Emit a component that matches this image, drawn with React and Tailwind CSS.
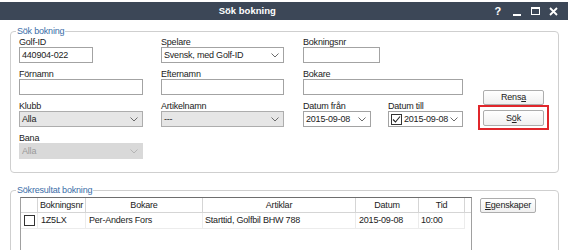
import React from 'react';

const Chevron = ({ color = '#6b6b6b' }) => (
    <svg width="8" height="5" viewBox="0 0 8 5" className="shrink-0">
        <polyline points="0.5,0.5 4,4 7.5,0.5" fill="none" stroke={color} strokeWidth="1" />
    </svg>
);

const CheckBox = ({ checked }) => (
    <div className="w-[11px] h-[11px] border border-[#333] bg-white flex items-center justify-center shrink-0">
        {checked && (
            <svg width="9" height="9" viewBox="0 0 9 9">
                <polyline points="1,4.5 3.5,7 8,1.5" fill="none" stroke="#222" strokeWidth="1.1" />
            </svg>
        )}
    </div>
);

const Field = ({ label, children }) => (
    <div className="flex flex-col">
        <div className="h-[10px] leading-[10px] text-[#222]">{label}</div>
        {children}
    </div>
);

const TextBox = ({ w, value }) => (
    <div className={`${w} h-[16px] border border-[#a3a3a3] bg-white px-[2px] leading-[14px] text-[#222]`}>
        {value}
    </div>
);

const Select = ({ w, value, kind = 'gray', checkbox }) => {
    const styles = {
        gray: 'bg-[#e6e6e6] border-[#adadad] text-[#222]',
        white: 'bg-white border-[#a3a3a3] text-[#222]',
        disabled: 'bg-[#d9d9d9] border-[#d9d9d9] text-[#9a9a9a]',
    };
    return (
        <div className={`${w} h-[16px] border ${styles[kind]} flex items-center justify-between pl-[2px] pr-[4px]`}>
            <div className="flex items-center gap-[2px]">
                {checkbox && <CheckBox checked />}
                <span className="leading-[14px]">{value}</span>
            </div>
            <Chevron color={kind === 'disabled' ? '#b5b5b5' : '#6b6b6b'} />
        </div>
    );
};

const Button = ({ children, w }) => (
    <div className={`${w} h-[15px] border border-[#adadad] rounded-[2px] bg-gradient-to-b from-white to-[#f0f0f0] flex items-center justify-center leading-[13px] text-[#222]`}>
        {children}
    </div>
);

const GroupBox = ({ title, className, children }) => (
    <div className={`relative border border-[#cfcfcf] rounded-[4px] ${className}`}>
        <span className="absolute -top-[7px] left-[5px] bg-white px-[1px] leading-[12px] text-[#3a6ea8]">
            {title}
        </span>
        {children}
    </div>
);

const headers = [
    { label: '', w: 'w-[17px]' },
    { label: 'Bokningsnr', w: 'w-[48px]' },
    { label: 'Bokare', w: 'w-[117px]' },
    { label: 'Artiklar', w: 'w-[153px]' },
    { label: 'Datum', w: 'w-[63px]' },
    { label: 'Tid', w: 'w-[46px]' },
];

const rows = [
    { nr: '1Z5LX', bokare: 'Per-Anders Fors', artiklar: 'Starttid, Golfbil BHW 788', datum: '2015-09-08', tid: '10:00' },
];

export default function App() {
    return (
        <div className="w-[570px] h-[250px] overflow-hidden bg-white font-['Liberation_Sans',Arial,sans-serif] text-[9px] tracking-[-0.2px]">
            {/* titelrad */}
            <div className="mt-[2px] mr-[2px] h-[18px] bg-[#3c4757] flex items-center text-white">
                <div className="flex-1 text-center font-bold text-[9.5px] tracking-normal">Sök bokning</div>
                <div className="flex items-center pr-[10px] font-bold text-[11px]">
                    <span className="leading-none">?</span>
                    <span className="ml-[12px] w-[8px] h-[2px] bg-white mt-[7px]" />
                    <span className="ml-[10px] w-[9px] h-[8px] border border-white border-t-2" />
                    <svg width="9" height="9" viewBox="0 0 9 9" className="ml-[9px]">
                        <path d="M1 1 L8 8 M8 1 L1 8" stroke="white" strokeWidth="1.8" />
                    </svg>
                </div>
            </div>

            {/* Sök bokning */}
            <GroupBox title="Sök bokning" className="ml-[10px] mt-[11px] w-[549px] h-[142px]">
                <div className="flex pl-[8px] pt-[5px]">
                    <div className="grid grid-cols-[142px_142px_159px] auto-rows-[26px] gap-y-[6px]">
                        <Field label="Golf-ID"><TextBox w="w-[74px]" value="440904-022" /></Field>
                        <Field label="Spelare"><Select w="w-[123px]" value="Svensk, med Golf-ID" kind="white" /></Field>
                        <Field label="Bokningsnr"><TextBox w="w-[77px]" value="" /></Field>

                        <Field label="Förnamn"><TextBox w="w-[124px]" value="" /></Field>
                        <Field label="Efternamn"><TextBox w="w-[123px]" value="" /></Field>
                        <Field label="Bokare"><TextBox w="w-[160px]" value="" /></Field>

                        <Field label="Klubb"><Select w="w-[124px]" value="Alla" /></Field>
                        <Field label="Artikelnamn"><Select w="w-[123px]" value="---" /></Field>
                        <div className="flex gap-[17px]">
                            <Field label="Datum från"><Select w="w-[68px]" value="2015-09-08" kind="white" /></Field>
                            <Field label="Datum till"><Select w="w-[75px]" value="2015-09-08" kind="white" checkbox /></Field>
                        </div>

                        <Field label="Bana"><Select w="w-[124px]" value="Alla" kind="disabled" /></Field>
                    </div>

                    <div className="ml-[16px] mt-[53px] flex flex-col items-center w-[71px]">
                        <Button w="w-[61px]">Rens<span className="underline">a</span></Button>
                        <div className="border-2 border-[#e0262b] px-[3px] pt-[3px] pb-[2px]">
                            <Button w="w-[61px] h-[16px]">S<span className="underline">ö</span>k</Button>
                        </div>
                    </div>
                </div>
            </GroupBox>

            {/* Sökresultat bokning */}
            <GroupBox title="Sökresultat bokning" className="ml-[10px] mt-[17px] w-[549px] h-[80px]">
                <div className="flex pl-[9px] pt-[6px]">
                    <div className="w-[452px] h-[70px] border border-[#a0a0a0] border-t-[#6e6e6e] bg-white">
                        <div className="flex h-[15px] border-b border-[#d5d5d5]">
                            {headers.map((h, i) => (
                                <div key={i} className={`${h.w} h-full border-r border-[#d5d5d5] flex items-center justify-center text-[#222] leading-[13px]`}>
                                    {h.label}
                                </div>
                            ))}
                        </div>
                        {rows.map((r) => (
                            <div key={r.nr} className="flex h-[16px] text-[#222]">
                                <div className="w-[17px] h-full flex items-center justify-center border-r border-b border-[#ececec]"><CheckBox /></div>
                                <div className="w-[48px] h-full flex items-center pl-[3px] border-r border-b border-[#ececec]">{r.nr}</div>
                                <div className="w-[117px] h-full flex items-center pl-[3px] border-r border-b border-[#ececec]">{r.bokare}</div>
                                <div className="w-[153px] h-full flex items-center pl-[2px] border-r border-b border-[#ececec]">{r.artiklar}</div>
                                <div className="w-[63px] h-full flex items-center pl-[3px] border-r border-b border-[#ececec]">{r.datum}</div>
                                <div className="w-[46px] h-full flex items-center pl-[2px] border-r border-b border-[#ececec]">{r.tid}</div>
                            </div>
                        ))}
                    </div>
                    <div className="ml-[8px] mt-[1px]">
                        <Button w="w-[56px]"><span className="underline">E</span>genskaper</Button>
                    </div>
                </div>
            </GroupBox>
        </div>
    );
}
